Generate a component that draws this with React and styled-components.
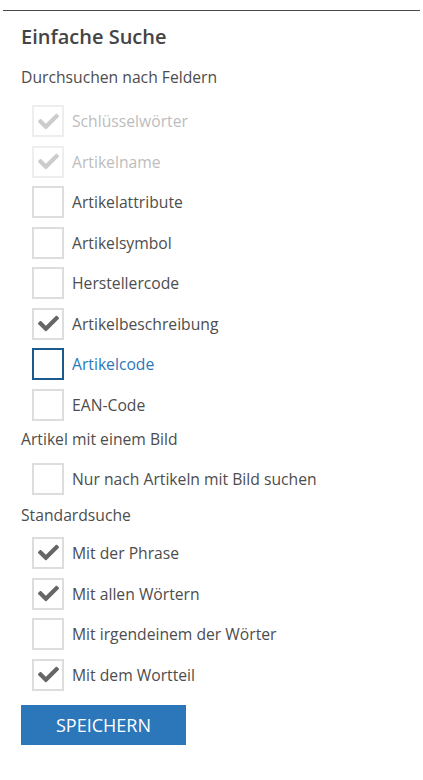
import React from "react";
import styled, { createGlobalStyle } from "styled-components";
import { FaCheck } from "react-icons/fa";

const Global = createGlobalStyle`
  html, body { margin: 0; padding: 0; background: #fff; }
  body { font-family: "Open Sans", "Liberation Sans", sans-serif; }
`;

const Page = styled.div`
  padding-top: 10px;
  width: 423px;
`;

const Rule = styled.div`
  margin-left: 3px;
  margin-right: 3px;
  border-top: 1px solid #4a4a4a;
`;

const Panel = styled.div`
  padding: 13px 21px 0 21px;
`;

const Title = styled.h2`
  margin: 0;
  font-size: 20px;
  font-weight: 600;
  line-height: 26px;
  color: #444;
`;

const GroupLabel = styled.div`
  font-size: 15.7px;
  line-height: 22px;
  color: #4d4d4d;
  margin-top: ${(p) => p.$top}px;
  margin-bottom: ${(p) => p.$bottom}px;
`;

const List = styled.div`
  display: flex;
  flex-direction: column;
  gap: 8.57px;
  padding-left: 11px;
`;

const Row = styled.label`
  display: flex;
  align-items: center;
  gap: 8px;
  height: 32px;
  font-size: 15.7px;
  color: ${(p) =>
    p.$state === "disabled" ? "#bdbdbd" : p.$state === "focus" ? "#2b77ba" : "#4d4d4d"};
`;

const Box = styled.span`
  box-sizing: border-box;
  width: 32px;
  height: 32px;
  flex: none;
  display: flex;
  align-items: center;
  justify-content: center;
  border: 2px solid
    ${(p) =>
      p.$state === "disabled" ? "#eeeeee" : p.$state === "focus" ? "#1b5a8f" : "#dddddd"};
  background: #fff;
  color: ${(p) => (p.$state === "disabled" ? "#cccccc" : "#666666")};
`;

const Button = styled.button`
  margin-top: 14px;
  width: 165px;
  height: 40px;
  border: none;
  background: #2b77ba;
  color: #fff;
  font-family: "Open Sans", "Liberation Sans", sans-serif;
  font-size: 18px;
  padding: 0;
`;

function Check({ label, checked, state }) {
  return (
    <Row $state={state}>
      <Box $state={state}>{checked && <FaCheck size={21} />}</Box>
      <span>{label}</span>
    </Row>
  );
}

const fields = [
  { label: "Schlüsselwörter", checked: true, state: "disabled" },
  { label: "Artikelname", checked: true, state: "disabled" },
  { label: "Artikelattribute" },
  { label: "Artikelsymbol" },
  { label: "Herstellercode" },
  { label: "Artikelbeschreibung", checked: true },
  { label: "Artikelcode", state: "focus" },
  { label: "EAN-Code" },
];

const standard = [
  { label: "Mit der Phrase", checked: true },
  { label: "Mit allen Wörtern", checked: true },
  { label: "Mit irgendeinem der Wörter" },
  { label: "Mit dem Wortteil", checked: true },
];

export default function App() {
  return (
    <Page>
      <Global />
      <Rule />
      <Panel>
        <Title>Einfache Suche</Title>
        <GroupLabel $top={16} $bottom={17}>Durchsuchen nach Feldern</GroupLabel>
        <List>
          {fields.map((f) => (
            <Check key={f.label} {...f} />
          ))}
        </List>
        <GroupLabel $top={7} $bottom={13}>Artikel mit einem Bild</GroupLabel>
        <List>
          <Check label="Nur nach Artikeln mit Bild suchen" />
        </List>
        <GroupLabel $top={9} $bottom={11}>Standardsuche</GroupLabel>
        <List>
          {standard.map((f) => (
            <Check key={f.label} {...f} />
          ))}
        </List>
        <Button>SPEICHERN</Button>
      </Panel>
    </Page>
  );
}
